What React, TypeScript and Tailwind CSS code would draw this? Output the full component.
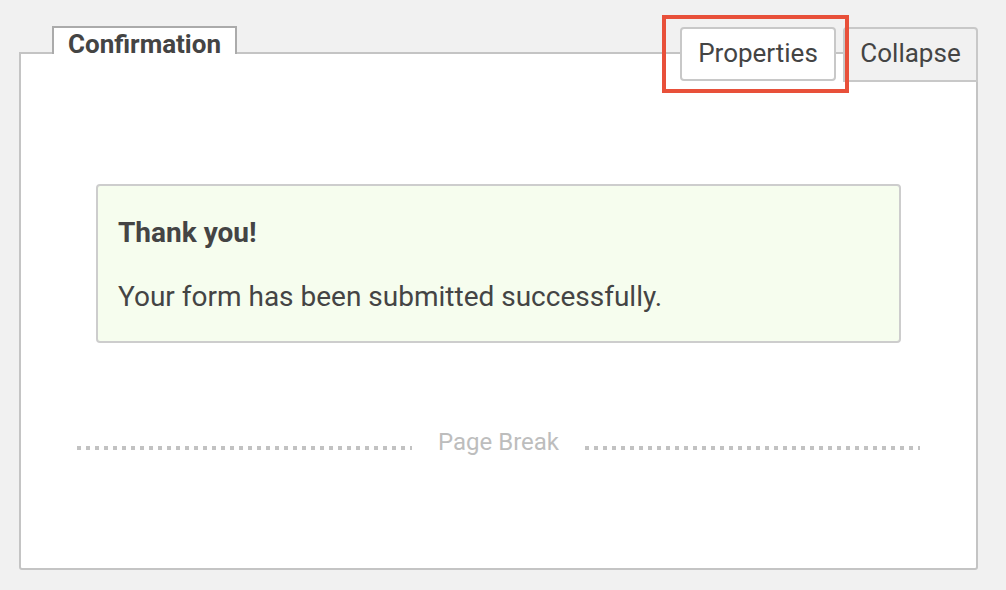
import React from 'react';

// dotted rule used on both sides of the page break label
function DotRule() {
  return (
    <div className="mt-[20px] h-[4px] flex-1 bg-[repeating-linear-gradient(to_right,#c2c2c2_0px,#c2c2c2_4px,transparent_4px,transparent_9px)]" />
  );
}

export default function App() {
  return (
    <div className="min-h-[590px] w-full bg-[#f1f1f1] px-[19px] pt-[26px] font-['Roboto','Liberation_Sans',sans-serif] text-[#444]">
      <div className="w-[959px]">
        {/* tab strip */}
        <div className="relative z-10 flex h-[26px] items-start justify-between">
          <div className="ml-[33px] h-[28px] w-[185px] border-2 border-b-0 border-[#ababab] bg-white pl-[14px] pt-[3px]">
            <span className="block text-[26px] font-bold leading-[26px]">Confirmation</span>
          </div>

          <div className="relative mt-px flex items-start gap-[7px]">
            <button className="flex h-[54px] w-[156px] items-center justify-center rounded-[4px] border-2 border-[#c8c8c8] bg-white pb-[2px] text-[26px] leading-none text-[#444]">
              Properties
            </button>
            <button className="flex h-[55px] w-[135px] items-center justify-center rounded-t-[4px] border-2 border-[#c8c8c8] bg-[#f1f1f1] pb-[4px] text-[26px] leading-none text-[#444]">
              Collapse
            </button>
            {/* highlight annotation */}
            <div className="pointer-events-none absolute left-[-18px] top-[-12px] h-[78px] w-[187px] border-4 border-[#e8503a]" />
          </div>
        </div>

        {/* panel body */}
        <div className="h-[518px] rounded-b-[3px] border-2 border-[#c4c4c4] bg-white">
          <div className="mx-[75px] mt-[130px] rounded-[4px] border-2 border-[#cdcdcd] bg-[#f6fdee] pb-[26px] pl-[20px] pt-[29px]">
            <p className="text-[28px] font-bold leading-[36px]">Thank you!</p>
            <p className="mt-[28px] text-[28px] leading-[36px]">Your form has been submitted successfully.</p>
          </div>

          <div className="mx-[56px] mt-[83px] flex items-start gap-[26px]">
            <DotRule />
            <span className="pt-[2px] text-[24px] leading-[28px] text-[#bdbdbd]">Page Break</span>
            <DotRule />
          </div>
        </div>
      </div>
    </div>
  );
}
